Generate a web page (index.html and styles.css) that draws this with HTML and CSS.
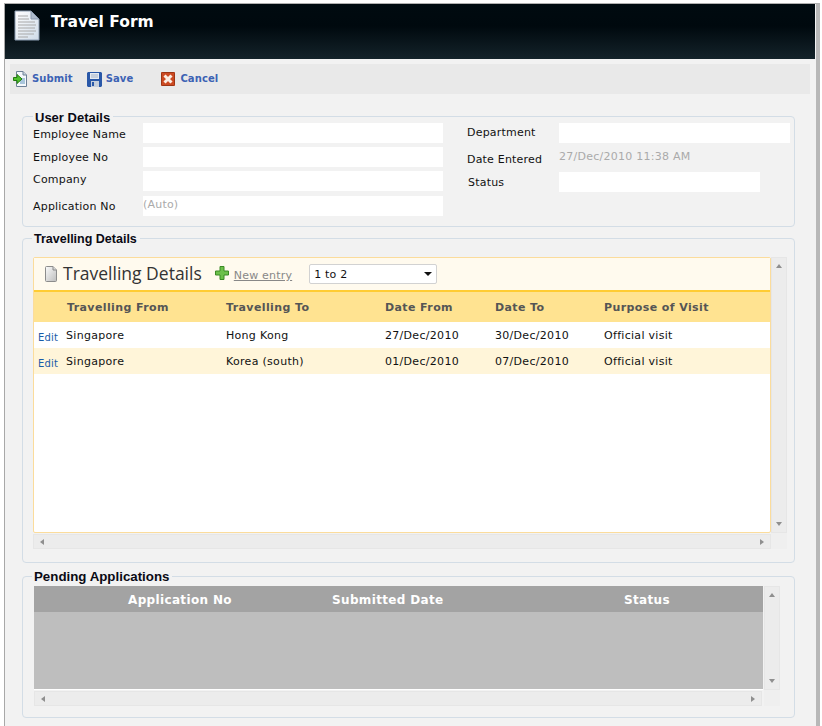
FILE: index.html
```html
<!DOCTYPE html>
<html lang="en">
<head>
<meta charset="utf-8">
<title>Travel Form</title>
<link rel="stylesheet" href="styles.css">
</head>
<body>
<div class="frame">
  <header class="banner">
    <svg class="banner-icon" width="26" height="31" viewBox="0 0 26 31">
      <defs><linearGradient id="pg" x1="0" y1="0" x2="1" y2="1"><stop offset="0" stop-color="#ffffff"/><stop offset="1" stop-color="#cfdbe8"/></linearGradient></defs>
      <path d="M1 1H17L25 9V30H1Z" fill="url(#pg)" stroke="#8a9bb0"/>
      <path d="M17 1V9H25Z" fill="#aebccd" stroke="#8a9bb0"/>
      <path d="M4 6H14M4 9H15M4 12H21M4 15H22M4 18H21M4 21H22M4 24H20M4 27H14" stroke="#a8a8a8" stroke-width="1"/>
    </svg>
    <h1 class="banner-title">Travel Form</h1>
  </header>

  <nav class="toolbar">
    <a class="tool tool-submit">
      <svg width="15" height="16" viewBox="0 0 15 16">
        <path d="M3.5 .5H10L13.5 4V15.5H3.5Z" fill="#f4f8fb" stroke="#6d8096"/>
        <path d="M10 .5V4H13.5" fill="#c7d3df" stroke="#6d8096"/>
        <rect x="7" y="7" width="5" height="6" fill="#a9c6dc"/>
        <path d="M.5 6.5H4V3.5L9 8L4 12.5V9.5H.5Z" fill="#4ec02c" stroke="#24780f" stroke-width="1"/>
      </svg>
      <span>Submit</span>
    </a>
    <a class="tool tool-save">
      <svg width="15" height="15" viewBox="0 0 15 15">
        <path d="M1 0H14L15 1V14L14 15H1L0 14V1Z" fill="#2a58a8"/>
        <rect x="3" y="1" width="9" height="6" fill="#e6ebf2"/>
        <path d="M4 3H11M4 5H11" stroke="#a5b3c8"/>
        <rect x="4" y="9" width="8" height="6" fill="#c4cedc"/>
        <rect x="5" y="10" width="2" height="4" fill="#2a58a8"/>
      </svg>
      <span>Save</span>
    </a>
    <a class="tool tool-cancel">
      <svg width="14" height="14" viewBox="0 0 14 14">
        <rect width="14" height="14" rx="1" fill="#cc4a22"/>
        <rect x=".5" y=".5" width="13" height="13" rx="1" fill="none" stroke="#9b3515"/>
        <path d="M3.5 3.5L10.5 10.5M10.5 3.5L3.5 10.5" stroke="#fbeee4" stroke-width="3"/>
      </svg>
      <span>Cancel</span>
    </a>
  </nav>

  <main class="content">
    <section class="group group-user">
      <h2 class="legend legend-user">User Details</h2>
      <div class="form">
        <div class="form-col form-col-left">
          <div class="row"><label class="label p5">Employee Name</label><div class="field"></div></div>
          <div class="row"><label class="label p4">Employee No</label><div class="field"></div></div>
          <div class="row"><label class="label p2">Company</label><div class="field"></div></div>
          <div class="row row-last"><label class="label p4">Application No</label><div class="field field-muted">(Auto)</div></div>
        </div>
        <div class="form-col form-col-right">
          <div class="row"><label class="label p3">Department</label><div class="field"></div></div>
          <div class="row"><label class="label p6">Date Entered</label><div class="value">27/Dec/2010 11:38 AM</div></div>
          <div class="row row-last"><label class="label p4 nudge">Status</label><div class="field field-short"></div></div>
        </div>
      </div>
    </section>

    <section class="group group-travel">
      <h2 class="legend legend-travel">Travelling Details</h2>
      <div class="scroller scroller-travel">
        <div class="panel">
          <div class="panel-title">
            <svg class="panel-icon" width="12" height="16" viewBox="0 0 12 16">
              <defs><linearGradient id="dc" x1="0" y1="0" x2="1" y2="1"><stop offset="0" stop-color="#fbfbfb"/><stop offset="1" stop-color="#bdbdbd"/></linearGradient></defs>
              <path d="M.5 1.5Q.5 .5 1.5 .5H8L11.5 4V14.5Q11.5 15.5 10.5 15.5H1.5Q.5 15.5 .5 14.5Z" fill="url(#dc)" stroke="#8c8c8c"/>
              <path d="M8 .5V4H11.5" fill="#d8d8d8" stroke="#8c8c8c"/>
            </svg>
            <span class="panel-name">Travelling Details</span>
            <svg class="plus" width="14" height="14" viewBox="0 0 14 14">
              <path d="M5 .5H9V5H13.5V9H9V13.5H5V9H.5V5H5Z" fill="#6cc04a" stroke="#3b8a25"/>
            </svg>
            <a class="new-entry">New entry</a>
            <div class="pager"><span>1 to 2</span><i class="pager-arrow"></i></div>
          </div>
          <div class="grid-row grid-head">
            <span></span><span>Travelling From</span><span>Travelling To</span><span>Date From</span><span>Date To</span><span>Purpose of Visit</span>
          </div>
          <div class="grid-row grid-body">
            <a class="edit">Edit</a><span>Singapore</span><span>Hong Kong</span><span>27/Dec/2010</span><span>30/Dec/2010</span><span>Official visit</span>
          </div>
          <div class="grid-row grid-body grid-alt">
            <a class="edit">Edit</a><span>Singapore</span><span>Korea (south)</span><span>01/Dec/2010</span><span>07/Dec/2010</span><span>Official visit</span>
          </div>
        </div>
        <div class="vbar"><i class="arrow up"></i><i class="arrow down"></i></div>
        <div class="hbar"><i class="arrow left"></i><i class="arrow right"></i></div>
        <div class="corner"></div>
      </div>
    </section>

    <section class="group group-pending">
      <h2 class="legend legend-pending">Pending Applications</h2>
      <div class="scroller scroller-pending">
        <div class="pending">
          <div class="pending-head"><span>Application No</span><span>Submitted Date</span><span>Status</span></div>
          <div class="pending-body"></div>
        </div>
        <div class="vbar"><i class="arrow up"></i><i class="arrow down"></i></div>
        <div class="hbar"><i class="arrow left"></i><i class="arrow right"></i></div>
        <div class="corner"></div>
      </div>
    </section>
  </main>
</div>
</body>
</html>
```
FILE: styles.css
```css
* { box-sizing: border-box; }
html, body { margin: 0; padding: 0; height: 100%; background: #fff; overflow: hidden; }
body { font-family: "DejaVu Sans", sans-serif; font-size: 11px; letter-spacing: .2px; color: #111; }

.frame {
  margin: 3px 0 0 4px;
  width: 816px;
  height: 723px;
  background: #f2f2f2;
  border-top: 1px solid #b0b0b0;
  border-left: 1px solid #a8a8a8;
  border-right: 4px solid #b8b8b8;
  overflow: hidden;
}

.banner {
  height: 55px;
  margin-right: 1px;
  display: flex;
  align-items: flex-start;
  padding: 6px 0 0 9px;
  background: linear-gradient(#000b10 0, #00090e 40%, #14232a 100%);
}
.banner-icon { flex: none; }
.banner-title {
  margin: 2px 0 0 11px;
  font-size: 15.5px;
  line-height: 20px;
  font-weight: bold;
  letter-spacing: 0;
  color: #fff;
}

.toolbar {
  margin: 5px 5px 0 5px;
  width: 800px;
  height: 30px;
  background: #e9e9e9;
  display: flex;
  align-items: center;
  font-weight: bold;
  font-size: 10px;
  letter-spacing: .1px;
  color: #3c62b4;
}
.tool { display: flex; align-items: center; }
.tool span { padding-bottom: 1px; }
.tool-submit { margin-left: 3px; gap: 4px; }
.tool-save { margin-left: 14px; gap: 4px; }
.tool-cancel { margin-left: 28px; gap: 5px; }
.tool svg { flex: none; }

.content { padding: 22px 0 0 17px; }
.group {
  position: relative;
  width: 773px;
  border: 1px solid #d3dde6;
  border-radius: 4px;
}
.legend {
  position: absolute;
  left: 9px;
  top: -7px;
  margin: 0;
  padding: 0 3px 0 2px;
  background: #f2f2f2;
  font-family: "Liberation Sans", Arial, sans-serif;
  line-height: 15px;
  font-weight: bold;
  letter-spacing: 0;
  color: #0a0a14;
}
.legend-user { left: 10px; font-size: 13px; }
.legend-travel { font-size: 12.5px; }
.legend-pending { top: -8px; font-size: 13.3px; }

.group-user { height: 111px; padding: 6px 0 0 10px; }
.form { display: flex; }
.form-col-left { width: 434px; }
.row { display: flex; height: 20px; margin-bottom: 4px; }
.form-col-left .row:nth-child(3) { margin-bottom: 5px; }
.form-col-right .row:nth-child(2) { margin-bottom: 5px; }
.label { flex: none; width: 110px; line-height: 14px; color: #111; }
.form-col-right .label { width: 92px; }
.nudge { padding-left: 1px; }
.p2 { padding-top: 2px; }
.p3 { padding-top: 3px; }
.p4 { padding-top: 4px; }
.p5 { padding-top: 5px; }
.p6 { padding-top: 6px; }
.field { width: 300px; height: 20px; background: #fff; }
.form-col-right .field { width: 231px; }
.form-col-right .field-short { width: 201px; }
.field-muted { color: #aaa; line-height: 18px; }
.value { color: #aaa; line-height: 20px; letter-spacing: .25px; }

.group-travel { height: 325px; margin-top: 11px; padding: 18px 0 0 10px; }
.scroller { display: grid; }
.scroller-travel { grid-template-columns: 738px 16px; grid-template-rows: 276px 16px; }
.scroller-pending { grid-template-columns: 730px 16px; grid-template-rows: 104px 16px; }

.panel {
  background: #fff;
  border: 1px solid #fbdc9c;
  border-radius: 2px;
}
.panel-title {
  height: 34px;
  display: flex;
  align-items: center;
  padding-left: 11px;
  background: #fffaee;
  border-bottom: 2px solid #ffcc33;
}
.panel-icon { flex: none; }
.panel-name {
  margin: -2px 0 0 6px;
  font-size: 17.5px;
  letter-spacing: 0;
  color: #333;
  font-family: "Open Sans", sans-serif;
}
.plus { margin: -3px 0 0 13px; flex: none; }
.new-entry { margin: 3px 0 0 5px; color: #888; text-decoration: underline; }
.pager {
  margin-left: 17px;
  width: 128px;
  height: 20px;
  background: #fff;
  border: 1px solid #d2d2d2;
  border-radius: 2px;
  padding: 0 4px 0 4px;
  display: flex;
  align-items: center;
  justify-content: space-between;
  color: #111;
}
.pager-arrow {
  border-left: 4px solid transparent;
  border-right: 4px solid transparent;
  border-top: 4px solid #111;
}

.grid-row {
  display: grid;
  grid-template-columns: 32px 160px 159px 110px 109px 1fr;
  align-items: center;
}
.grid-head {
  height: 30px;
  background: #ffe391;
  font-weight: bold;
  font-size: 11px;
  letter-spacing: .4px;
  color: #555;
}
.grid-head span:nth-child(2) { padding-left: 1px; }
.grid-body { height: 26px; color: #111; letter-spacing: .3px; }
.grid-alt { background: #fff5d9; }
.edit { padding: 4px 0 0 4px; color: #1a5ca8; font-size: 10px; letter-spacing: .2px; }

.vbar {
  background: #ececec;
  border: 1px solid #e6e6e6;
  display: flex;
  flex-direction: column;
  justify-content: space-between;
  align-items: center;
  padding: 6px 0;
}
.hbar {
  margin-top: 1px;
  background: #ececec;
  border: 1px solid #e6e6e6;
  display: flex;
  justify-content: space-between;
  align-items: center;
  padding: 0 6px;
}
.corner { background: #efefef; }
.arrow { display: block; width: 0; height: 0; }
.up { border: 3.5px solid transparent; border-top: 0; border-bottom: 4px solid #8f8f8f; }
.down { border: 3.5px solid transparent; border-bottom: 0; border-top: 4px solid #8f8f8f; }
.left { border: 3.5px solid transparent; border-left: 0; border-right: 4px solid #8f8f8f; }
.right { border: 3.5px solid transparent; border-right: 0; border-left: 4px solid #8f8f8f; }

.group-pending { height: 142px; margin-top: 13px; padding: 9px 0 0 11px; }
.pending { width: 729px; border-bottom: 1px solid #fff; display: flex; flex-direction: column; }
.pending-head {
  height: 26px;
  flex: none;
  background: #a3a3a3;
  display: grid;
  grid-template-columns: 204px 292px 1fr;
  align-items: center;
  padding: 1px 0 0 94px;
  color: #fff;
  font-weight: bold;
  font-size: 12px;
  letter-spacing: .35px;
}
.pending-body { flex: 1; background: #bebebe; }
.scroller-pending .hbar { width: 728px; }
```
